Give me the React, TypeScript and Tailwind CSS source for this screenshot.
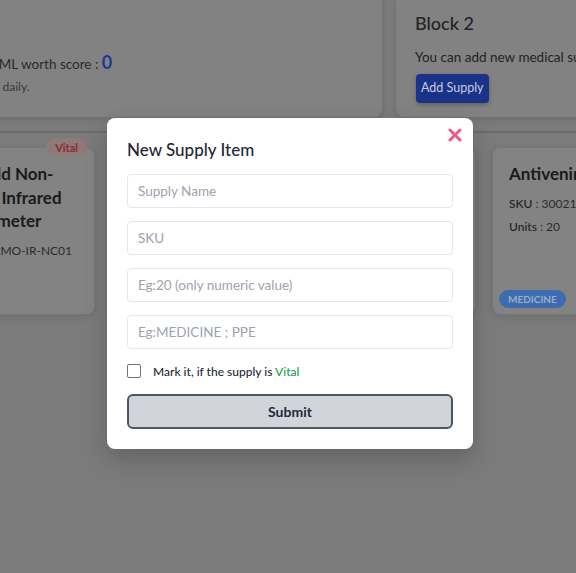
import React from "react";

const font = { fontFamily: "Lato, 'Noto Sans', 'Liberation Sans', sans-serif" };

function SmallCard({
  title,
  sku,
  units,
  vital,
  category,
}: {
  title: string[];
  sku: string;
  units: string;
  vital?: boolean;
  category: string;
}) {
  return (
    <div className="relative w-[174.5px] h-[168px] shrink-0 rounded-lg border border-[#777777] bg-[#838383] px-4 pt-[14px] shadow-[0_2px_6px_rgba(0,0,0,0.12)]">
      {vital && (
        <span className="absolute -top-[10px] right-[7px] rounded-full bg-[#8f7a7a] px-[9px] py-[3px] text-[11px] font-bold leading-[13px] text-[#8c2b2b]">
          Vital
        </span>
      )}
      <div className="text-[17px] font-bold leading-[23.5px] text-[#1a1a1a] whitespace-nowrap">
        {title.map((t) => (
          <div key={t}>{t}</div>
        ))}
      </div>
      <div className="mt-[6px] text-[12px] leading-[23px] text-[#2b2b2b] whitespace-nowrap">
        <span className="font-medium text-[#222222]">SKU</span> : {sku}
      </div>
      <div className="text-[12px] leading-[23px] text-[#2b2b2b] whitespace-nowrap">
        <span className="font-medium text-[#222222]">Units</span> : {units}
      </div>
      <span className="absolute bottom-[6px] left-[6px] rounded-full bg-[#3d6cb0] px-[9px] py-[3px] text-[10px] font-bold leading-[12px] text-[#9cadc4]">
        {category}
      </span>
    </div>
  );
}

export default function App() {
  return (
    <div className="relative h-[573px] w-[576px] overflow-hidden bg-[#7b7b7b]" style={font}>
      {/* background page */}
      <div>
        <div className="-ml-[120px] -mt-[10px] flex gap-[14px]">
          <div className="h-[127px] w-[502px] shrink-0 rounded-lg bg-[#828282] pl-[58px] pt-5 shadow-[0_2px_6px_rgba(0,0,0,0.12)]">
            <div className="text-[18px] font-medium leading-[26px] text-[#222222]">Block 1</div>
            <div className="mt-[13px] whitespace-nowrap text-[13.5px] leading-[26px] text-[#2a2a2a]">
              Your total ML worth score :{" "}
              <span className="text-[18px] font-bold text-[#1c3890]">0</span>
            </div>
            <div className="mt-[1px] whitespace-nowrap text-[12px] leading-[18px] text-[#3a3a3a]">
              It's updated daily.
            </div>
          </div>
          <div className="h-[127px] w-[300px] shrink-0 rounded-lg bg-[#828282] pl-[19px] pt-5 shadow-[0_2px_6px_rgba(0,0,0,0.12)]">
            <div className="text-[18px] font-medium leading-[26px] text-[#222222]">Block 2</div>
            <div className="mt-[11px] whitespace-nowrap text-[13.5px] leading-[20px] text-[#222222]">
              You can add new medical supplies here.
            </div>
            <button className="mt-[7px] ml-[1px] h-[29px] rounded bg-[#1a3389] px-[5px] text-[12.5px] text-[#c5cde0] shadow-[0_2px_4px_rgba(0,0,0,0.25)]">
              Add Supply
            </button>
          </div>
        </div>
        <div className="mt-[14px] border-t-2 border-[#6c6c6c]" />
        <div className="-ml-[79.5px] mt-[14px] flex gap-4">
          <SmallCard
            title={["Handheld Non-", "Contact Infrared", "Thermometer"]}
            sku="THERMO-IR-NC01"
            units="8"
            vital
            category="DEVICE"
          />
          <SmallCard title={["Surgical Masks"]} sku="200110" units="50" category="PPE" />
          <SmallCard title={["Nitrile Gloves"]} sku="200115" units="40" category="PPE" />
          <SmallCard title={["Antivenin"]} sku="300212457" units="20" category="MEDICINE" />
        </div>
      </div>

      {/* modal overlay */}
      <div className="absolute inset-0 flex items-start justify-center pl-[4px] pt-[118px]">
        <div className="relative w-[366px] rounded-lg bg-white px-5 pb-5 pt-[19px] shadow-[0_10px_25px_rgba(0,0,0,0.2)]">
          <button className="absolute right-[11px] top-[10px] flex h-[14px] w-[14px] items-center justify-center text-[#ee5a84]">
            <svg viewBox="0 0 14 14" width="14" height="14" fill="none" stroke="currentColor" strokeWidth="3" strokeLinecap="round">
              <path d="M2 2L12 12M12 2L2 12" />
            </svg>
          </button>
          <h2 className="text-[17px] font-medium leading-[26px] text-[#1f2937]">New Supply Item</h2>
          <div className="mt-[11px] flex flex-col gap-[13px]">
            {["Supply Name", "SKU", "Eg:20 (only numeric value)", "Eg:MEDICINE ; PPE"].map((p) => (
              <input
                key={p}
                placeholder={p}
                className="h-[34px] w-full rounded border border-[#e5e7eb] px-[10px] text-[13.5px] text-gray-800 placeholder:text-[#9ca3af] outline-none"
                style={font}
              />
            ))}
          </div>
          <label className="mt-[11px] flex items-center">
            <span className="h-[14px] w-[14px] rounded-[2px] border border-[#6b7280] bg-white" />
            <span className="ml-[12px] mt-[3px] text-[12px] font-medium text-[#1f2937]">
              Mark it, if the supply is <span className="text-[#16a34a]">Vital</span>
            </span>
          </label>
          <button className="mt-[13px] h-[35px] w-full rounded-md border-2 border-[#4b5563] bg-[#d1d5db] text-[14px] font-bold text-[#1f2937]">
            Submit
          </button>
        </div>
      </div>
    </div>
  );
}
